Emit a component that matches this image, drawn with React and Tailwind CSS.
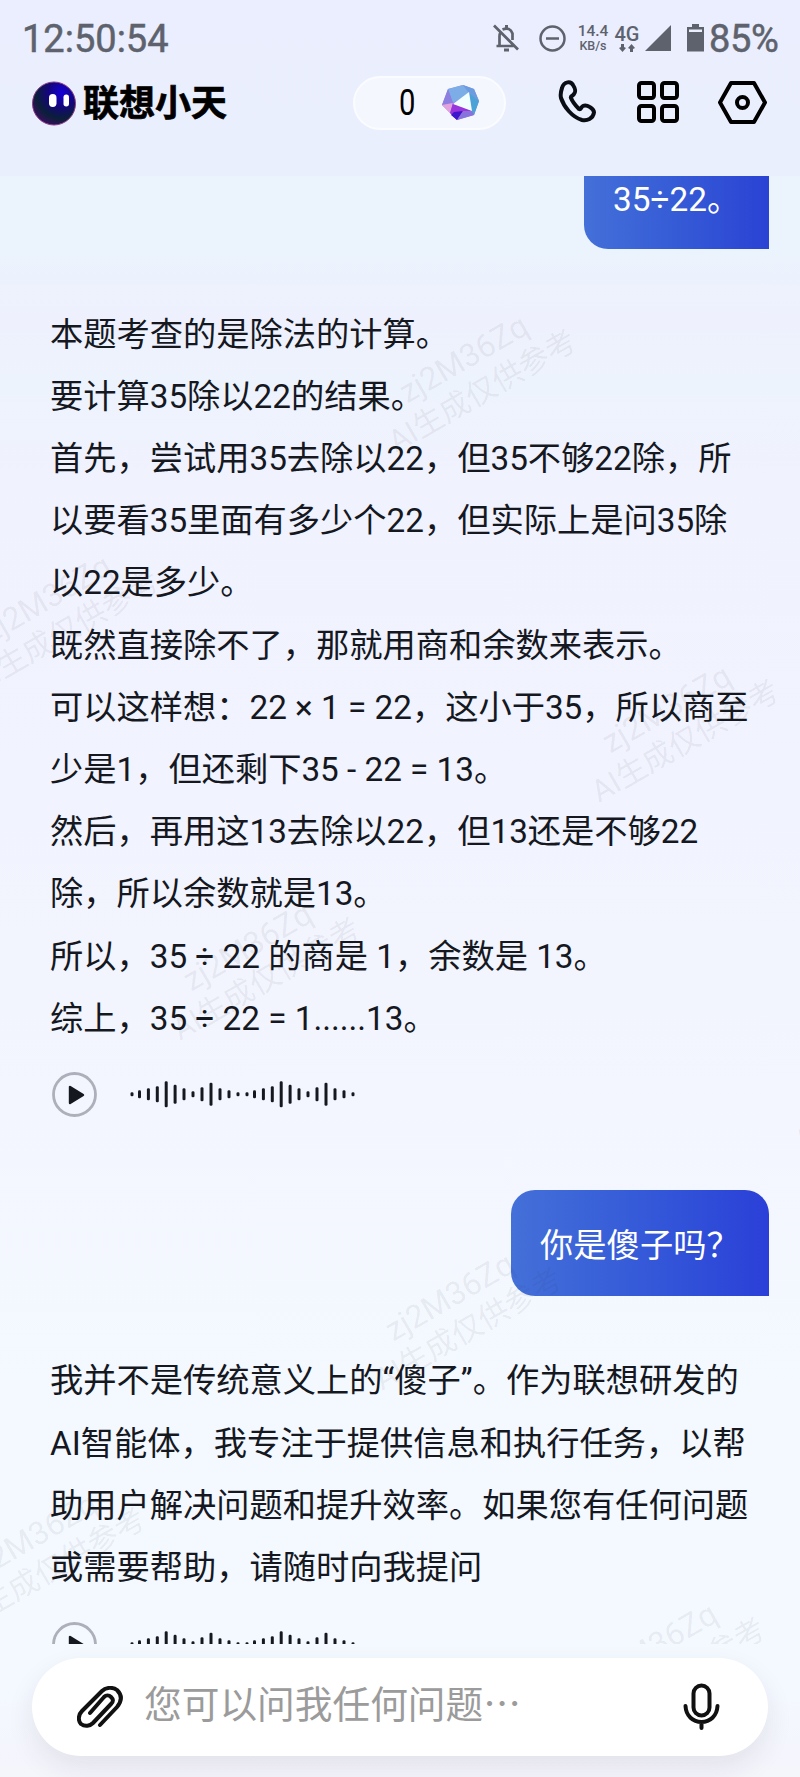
import React from 'react';

const firstAnswer = [
  '本题考查的是除法的计算。',
  '要计算35除以22的结果。',
  '首先，尝试用35去除以22，但35不够22除，所',
  '以要看35里面有多少个22，但实际上是问35除',
  '以22是多少。',
  '既然直接除不了，那就用商和余数来表示。',
  '可以这样想：22 × 1 = 22，这小于35，所以商至',
  '少是1，但还剩下35 - 22 = 13。',
  '然后，再用这13去除以22，但13还是不够22',
  '除，所以余数就是13。',
  '所以，35 ÷ 22 的商是 1，余数是 13。',
  '综上，35 ÷ 22 = 1......13。',
];

const secondAnswer = [
  '我并不是传统意义上的“傻子”。作为联想研发的',
  'AI智能体，我专注于提供信息和执行任务，以帮',
  '助用户解决问题和提升效率。如果您有任何问题',
  '或需要帮助，请随时向我提问',
];

// x and height of the wave bars
const wave = [
  [0, 4], [7.5, 8], [16.4, 12], [25.3, 16], [34.2, 26], [43.1, 19], [52, 12], [61, 6], [70, 14],
  [79, 23], [88, 12], [97, 8], [106, 4], [115, 4], [122.5, 8], [131.4, 12], [140.3, 16], [149.2, 26],
  [158.1, 19], [167, 12], [176, 6], [185, 14], [194, 23], [203, 12], [212, 8], [221, 4],
];

// centers of the watermark tiles, relative to the message list
const marks = [
  [473, 199], [56, 439], [676, 549], [257, 787], [879, 899], [459, 1137], [42, 1377], [662, 1487],
];

const Answer = ({ lines }) => (
  <div className="pl-[50px] text-[33.25px] leading-[62.2px] text-[#15181f]">
    {lines.map((line) => (
      <p key={line} className="whitespace-nowrap">{line}</p>
    ))}
  </div>
);

const VoiceBar = () => (
  <div className="flex items-center pl-[52px]">
    <svg width="45" height="45" viewBox="0 0 45 45">
      <circle cx="22.5" cy="22.5" r="21" fill="none" stroke="#adb0ba" strokeWidth="2.8" />
      <path d="M18 15v16L31 23z" fill="#15181f" stroke="#15181f" strokeWidth="2.4" strokeLinejoin="round" />
    </svg>
    <svg width="240" height="45" viewBox="0 0 240 45" className="ml-[30px]">
      {wave.map(([x, h]) => (
        <rect key={x} x={x + 3.5} y={22.3 - h / 2} width="3" height={h} rx="1.3" fill="#15181f" />
      ))}
    </svg>
  </div>
);

const StatusBar = () => (
  <div className="flex h-[76px] items-center pl-[22px] pr-[22px] text-[#5e626d]">
    <span className="mt-[2px] text-[38px] leading-none [-webkit-text-stroke:0.5px_#5e626d]">12:50:54</span>
    <div className="ml-auto flex items-center">
      <svg width="26" height="28" viewBox="0 0 26 28" fill="none" stroke="currentColor" strokeWidth="2.7">
        <path d="M1 1.5l24 24M3.5 22h17M6.5 21.5V12q0-2 1-3.6M9.5 5.5q7.500-3 10 4V16" />
        <path d="M13.5 1v4M11 26h5" strokeWidth="3" />
      </svg>
      <svg width="27" height="27" viewBox="0 0 27 27" fill="none" stroke="currentColor" strokeWidth="2.5" className="ml-[20px]">
        <circle cx="13.5" cy="13.5" r="12" />
        <path d="M7 13.5h13" />
      </svg>
      <div className="ml-[11px] flex w-[32px] flex-col items-center font-medium leading-none">
        <span className="text-[15.5px] leading-[15px]">14.4</span>
        <span className="text-[12.5px] leading-[14px]">KB/s</span>
      </div>
      <div className="ml-[5px] flex w-[26px] flex-col items-center font-medium">
        <span className="text-[20px] leading-[18px]">4G</span>
        <svg width="16" height="8" viewBox="0 0 16 8" fill="currentColor" className="mt-[1px]">
          <path d="M3.5 8L0 4L2 3V0h3v3l2 1zM12.5 0L9 4l2 1v3h3V5l2-1z" />
        </svg>
      </div>
      <svg width="26" height="26" viewBox="0 0 26 26" fill="currentColor" className="ml-[5px]">
        <path d="M26 0v26H0z" />
      </svg>
      <svg width="17" height="28" viewBox="0 0 17 28" fill="currentColor" className="ml-[16px]">
        <path d="M5 0h7v3h5v24.5H0V3h5zM2 5.5V8h13V5.5z" fillRule="evenodd" />
      </svg>
      <span className="ml-[5px] mt-[2px] w-[69px] text-[38px] leading-none tracking-[-0.3px] [-webkit-text-stroke:0.5px_#5e626d]">85%</span>
    </div>
  </div>
);

const Header = () => (
  <div className="flex h-[100px] items-start pl-[32px] pr-[33px]">
    <div className="flex h-[54px] items-center">
      <svg width="45" height="45" viewBox="0 0 45 45">
        <defs>
          <radialGradient id="face" cx="0.68" cy="0.25" r="0.8">
            <stop offset="0" stopColor="#1400d8" />
            <stop offset="0.4" stopColor="#14057c" />
            <stop offset="0.75" stopColor="#0b1f39" />
            <stop offset="1" stopColor="#35105c" />
          </radialGradient>
        </defs>
        <circle cx="22" cy="22.5" r="21.5" fill="url(#face)" stroke="#8a3d86" strokeWidth="1" />
        <rect x="17" y="13" width="7.5" height="13" rx="3.7" fill="#fff" />
        <rect x="31.5" y="13.5" width="5.5" height="12" rx="2.7" fill="#fff" />
      </svg>
      <h1 className="ml-[6px] mt-[2px] text-[36px] font-bold leading-none text-black [-webkit-text-stroke:0.7px_#000]">联想小天</h1>
    </div>
    <div className="ml-auto flex h-[54px] w-[153px] items-center rounded-full border-2 border-[#fbfcff] bg-[#f4f7fe]">
      <span className="ml-[42px] w-[20px] scale-x-80 text-center text-[36.5px] leading-none text-black">0</span>
      <svg width="38" height="38" viewBox="0 0 38 38" className="ml-[25px]">
        <path d="M6 5L21 1L32 5L37 17L32 31L15 36L8 29L0 21z" fill="#9688e4" />
        <path d="M6 5L21 1L27 9L11 19z" fill="#7cade6" />
        <path d="M21 1L32 5L37 17L27 9z" fill="#6c9ce0" />
        <path d="M27 9L37 17L32 31L30 27z" fill="#4ba2d6" />
        <path d="M6 5L11 19L0 21z" fill="#8c7fe0" />
        <path d="M0 21L11 19L8 29z" fill="#e4a2dc" />
        <path d="M8 29L11 19L30 27L15 36z" fill="#9a35dc" />
        <path d="M12 28L21 27L15 36L9 31z" fill="#3c17cc" />
        <path d="M21 27L30 27L32 31L15 36z" fill="#8873dc" />
        <path d="M27 8L30 27L11 20z" fill="#f0fffe" />
      </svg>
    </div>
    <svg width="38" height="44" viewBox="0 0 38 44" fill="none" stroke="#0b0d14" strokeWidth="4" strokeLinejoin="round" className="ml-[52px] mt-[4px]">
      <path d="M4 8C6 1 13 1 15 5C17 8 18 12 16 14C15 16 12 16 13 18C15 23 19 27 21 29C23 30 23 27 25 26C29 24 36 29 36 32.5C35 39 29 41 24 40C14 37 6 27 3 18C2 14 3 11 4 8z" />
    </svg>
    <svg width="42" height="42" viewBox="0 0 42 42" fill="none" stroke="#000" strokeWidth="4" className="ml-[41px] mt-[5px]">
      <rect x="2" y="2" width="15" height="15" rx="2.5" />
      <rect x="25" y="2" width="15" height="15" rx="2.5" />
      <rect x="2" y="25" width="15" height="15" rx="2.5" />
      <rect x="25" y="25" width="15" height="15" rx="2.5" />
    </svg>
    <svg width="49" height="43" viewBox="0 0 49 43" fill="none" stroke="#000" strokeWidth="4" strokeLinejoin="round" className="ml-[39px] mt-[5px]">
      <path d="M13 2H36L47 21.5L36 41H13L2 21.5z" />
      <circle cx="24.5" cy="21.5" r="5.5" />
    </svg>
  </div>
);

const InputBar = () => (
  <div className="mx-[32px] mt-[14px] flex h-[98px] items-center rounded-full bg-white pl-[45px] pr-[48px] shadow-[0_12px_28px_rgba(40,30,60,0.09)]">
    <svg width="46" height="42" viewBox="0 0 46 42" fill="none" stroke="#111" strokeWidth="4" strokeLinecap="round">
      <path d="M23 39L40 21C45 15 45 9 40 4C36 1 29 1 25 5L5 25C1 29 1 35 4 38C8 41 13 40 16 37L34 18C37 15 36 13 34 11C32 9 29 9 27 11L13 27" />
    </svg>
    <input
      type="text"
      placeholder="您可以问我任何问题⋯"
      className="mb-[3px] ml-[21px] min-w-0 flex-1 bg-transparent text-[37.7px] text-[#111] outline-none placeholder:text-[#9b9b9b]"
    />
    <svg width="37" height="48" viewBox="0 0 37 48" fill="none" stroke="#111" strokeWidth="4" strokeLinecap="round">
      <rect x="10.5" y="2.5" width="16" height="30" rx="8" />
      <path d="M2.5 23C3 33 10 39 18.5 39S34 33 34.5 23M18.5 40v5" />
    </svg>
  </div>
);

const App = () => {
  return (
    <div className="flex h-[1777px] w-[800px] flex-col overflow-hidden bg-[linear-gradient(180deg,#eaeefe_0px,#eaeffd_176px,#ebf3fd_176px,#ebf3fd_250px,#eef1fd_320px,#edf3fd_385px,#f0f2fe_480px,#f1f3fe_800px,#f3f6fe_1100px,#f4f8ff_1400px,#f4f8ff_1690px,#f5f5fc_1777px)] font-[Roboto,'Noto_Sans_CJK_SC',sans-serif]">
      <StatusBar />
      <Header />
      <div className="relative h-[1468px] shrink-0 overflow-hidden">
        <div className="ml-auto mr-[31px] flex h-[73px] w-[185px] items-start rounded-bl-[24px] bg-linear-to-r from-[#4470d8] to-[#2b42d4] pl-[29px] text-[33.3px] leading-[48px] text-white">
          35÷22。
        </div>
        <div className="mt-[54.5px]">
          <Answer lines={firstAnswer} />
        </div>
        <div className="mt-[22.5px]">
          <VoiceBar />
        </div>
        <div className="ml-auto mr-[31px] mt-[73px] flex h-[106px] w-[258px] items-center rounded-[24px] rounded-br-none bg-linear-to-r from-[#4470d8] to-[#2b3fd8] pl-[29px] pt-[6px] text-[33.3px] text-white">
          你是傻子吗？
        </div>
        <div className="mt-[54px]">
          <Answer lines={secondAnswer} />
        </div>
        <div className="mt-[23px]">
          <VoiceBar />
        </div>
        {marks.map(([x, y]) => (
          <div
            key={x}
            className="pointer-events-none absolute w-[220px] -translate-x-1/2 -translate-y-1/2 -rotate-30 text-center text-[30.5px] leading-[37px] text-[#30303c]/7"
            style={{ left: x, top: y }}
          >
            <span className="text-[32px]">zj2M36Zq</span>
            <br />
            AI生成仅供参考
          </div>
        ))}
      </div>
      <InputBar />
    </div>
  );
};

export default App;
